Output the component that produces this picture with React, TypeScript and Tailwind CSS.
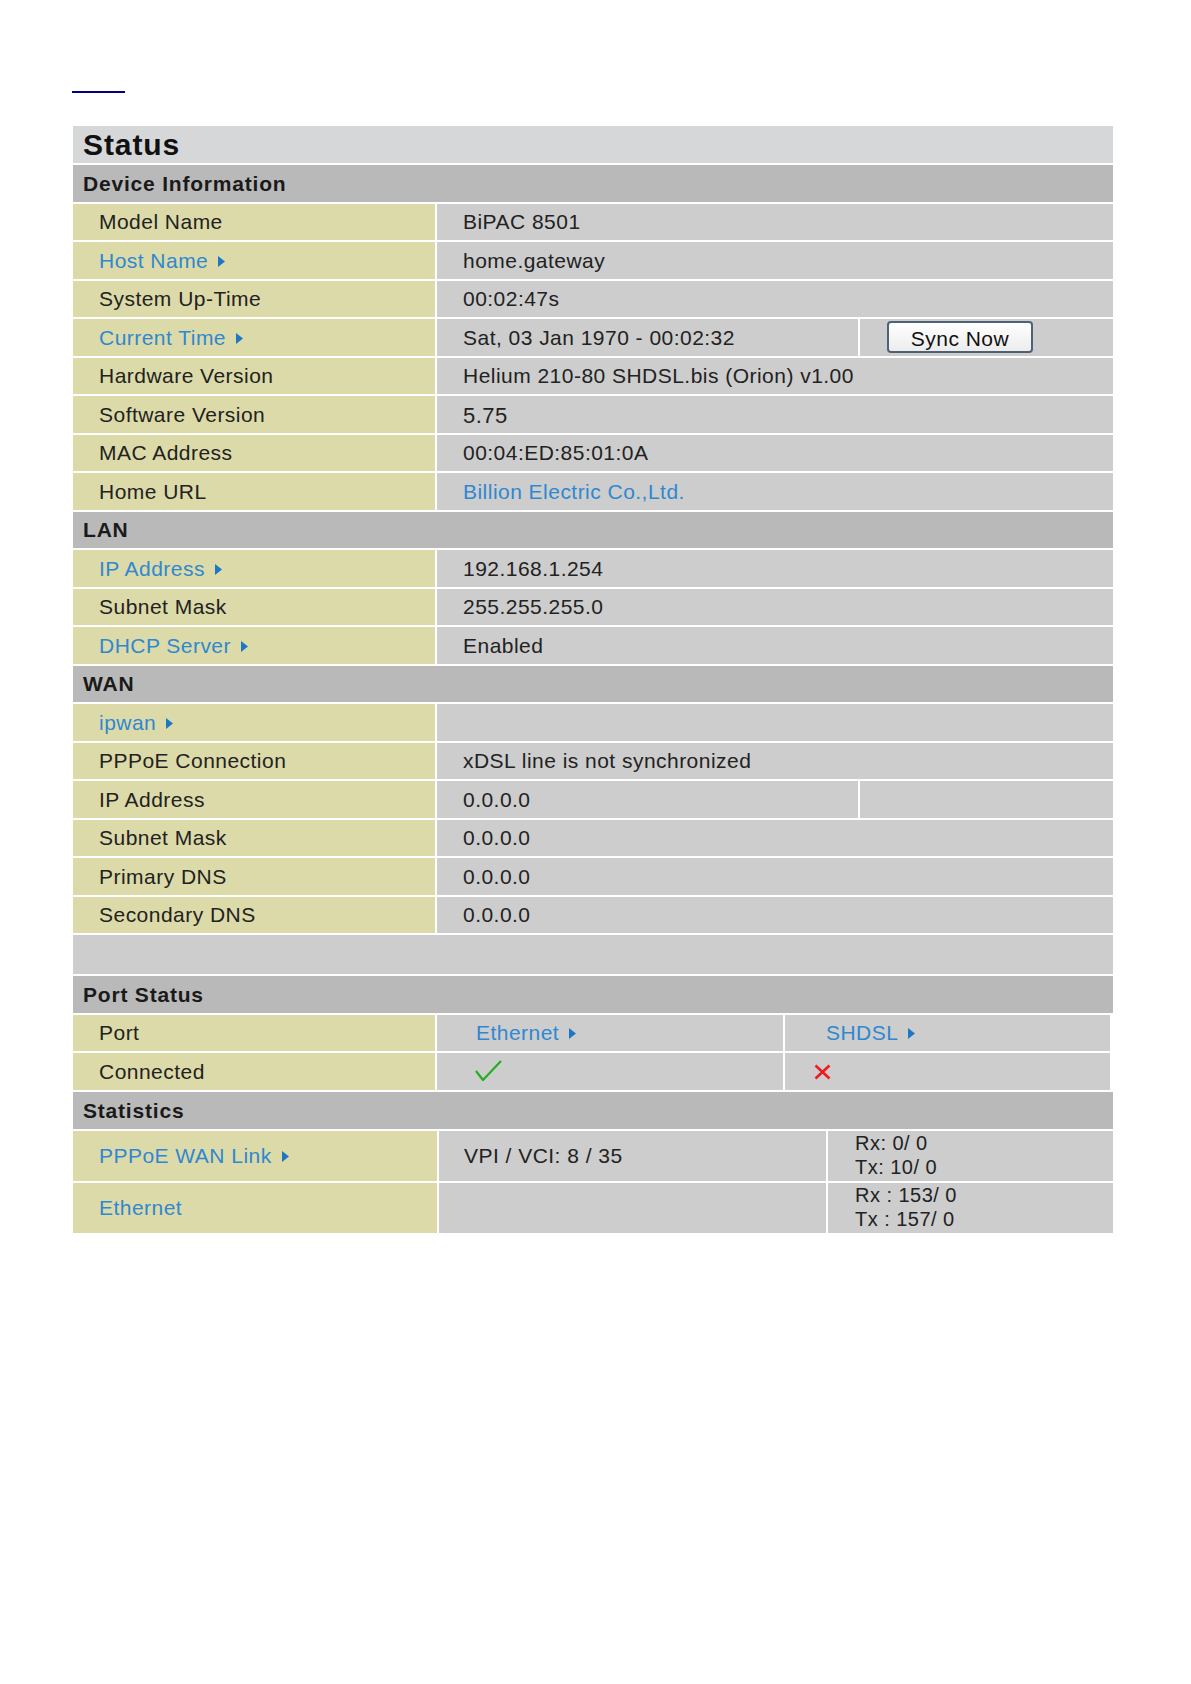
import React from "react"

const label = "bg-[#dcdaa8] pl-[26px] flex items-center"
const value = "bg-[#cdcdcd] pl-[26px] flex items-center"
const link = "text-[#2f88d0]"

function Arrow() {
	return (
		<svg width="7" height="11" viewBox="0 0 7 11" className="ml-[10px] mt-[2px]">
			<polygon points="0,0 7,5.5 0,11" fill="#1c78c4" />
		</svg>
	)
}

function Section({ title }: { title: string }) {
	return (
		<div className="h-[36.5px] bg-[#b9b9b9] pl-[10px] flex items-center font-bold text-[21px] tracking-[0.8px] text-[#1a1a1a]">
			{title}
		</div>
	)
}

function Row({ name, isLink, children }: { name: string; isLink?: boolean; children?: React.ReactNode }) {
	return (
		<div className="h-[36.5px] grid grid-cols-[362px_1fr] gap-[2px]">
			<div className={label}>
				<span className={isLink ? link : ""}>{name}</span>
				{isLink && <Arrow />}
			</div>
			{children}
		</div>
	)
}

function Check() {
	return (
		<svg width="28" height="24" viewBox="0 0 28 24">
			<path d="M1 12 L8 21 L26 2" fill="none" stroke="#22b022" strokeWidth="2.2" strokeLinejoin="round" />
		</svg>
	)
}

function Cross() {
	return (
		<svg width="17" height="16" viewBox="0 0 17 16">
			<path d="M1.5 1.5 L15.5 14.5 M15.5 1.5 L1.5 14.5" stroke="#ee1c1c" strokeWidth="2.6" />
		</svg>
	)
}

export default function App() {
	return (
		<div className="min-h-screen bg-white font-['Liberation_Sans',Arial,sans-serif] text-[21px] tracking-[0.47px] text-[#222]">
			<div className="pl-[72px] pt-[91px]">
				<div className="w-[53px] h-[2px] bg-[#000080]" />
			</div>
			<div className="ml-[73px] mt-[33px] w-[1040px] flex flex-col gap-[2px]">
				<div className="h-[37px] bg-[#d6d7d9] pl-[10px] flex items-center text-[30px] font-bold text-[#111] tracking-[0.9px]">
					Status
				</div>
				<Section title="Device Information" />
				<Row name="Model Name"><div className={value}>BiPAC 8501</div></Row>
				<Row name="Host Name" isLink><div className={value}>home.gateway</div></Row>
				<Row name="System Up-Time"><div className={value}>00:02:47s</div></Row>
				<Row name="Current Time" isLink>
					<div className="grid grid-cols-[421px_1fr] gap-[2px]">
						<div className={value}>Sat, 03 Jan 1970 - 00:02:32</div>
						<div className="bg-[#cdcdcd] pl-[27px] flex items-center">
							<button className="w-[146px] h-[32px] rounded-[4px] border-2 border-[#4d6279] bg-gradient-to-b from-white to-[#ececec] text-[21px] text-[#111]">
								Sync Now
							</button>
						</div>
					</div>
				</Row>
				<Row name="Hardware Version"><div className={value}>Helium 210-80 SHDSL.bis (Orion) v1.00</div></Row>
				<Row name="Software Version"><div className={`${value} text-[22px] pt-[3px]`}>5.75</div></Row>
				<Row name="MAC Address"><div className={value}>00:04:ED:85:01:0A</div></Row>
				<Row name="Home URL"><div className={`${value} ${link}`}>Billion Electric Co.,Ltd.</div></Row>

				<Section title="LAN" />
				<Row name="IP Address" isLink><div className={value}>192.168.1.254</div></Row>
				<Row name="Subnet Mask"><div className={value}>255.255.255.0</div></Row>
				<Row name="DHCP Server" isLink><div className={value}>Enabled</div></Row>

				<Section title="WAN" />
				<Row name="ipwan" isLink><div className={value} /></Row>
				<Row name="PPPoE Connection"><div className={value}>xDSL line is not synchronized</div></Row>
				<Row name="IP Address">
					<div className="grid grid-cols-[421px_1fr] gap-[2px]">
						<div className={value}>0.0.0.0</div>
						<div className="bg-[#cdcdcd]" />
					</div>
				</Row>
				<Row name="Subnet Mask"><div className={value}>0.0.0.0</div></Row>
				<Row name="Primary DNS"><div className={value}>0.0.0.0</div></Row>
				<Row name="Secondary DNS"><div className={value}>0.0.0.0</div></Row>
				<div className="h-[39px] bg-[#cdcdcd]" />

				<Section title="Port Status" />
				<div className="h-[36.5px] grid grid-cols-[362px_346px_325px] gap-[2px]">
					<div className={label}>Port</div>
					<div className="bg-[#cdcdcd] pl-[39px] flex items-center">
						<span className={link}>Ethernet</span>
						<Arrow />
					</div>
					<div className="bg-[#cdcdcd] pl-[41px] flex items-center">
						<span className={link}>SHDSL</span>
						<Arrow />
					</div>
				</div>
				<div className="h-[37px] grid grid-cols-[362px_346px_325px] gap-[2px]">
					<div className={label}>Connected</div>
					<div className="bg-[#cdcdcd] pl-[38px] flex items-center pb-[2px]">
						<Check />
					</div>
					<div className="bg-[#cdcdcd] pl-[29px] flex items-center">
						<Cross />
					</div>
				</div>

				<Section title="Statistics" />
				<div className="h-[50px] grid grid-cols-[364px_387px_1fr] gap-[2px]">
					<div className={label}>
						<span className={link}>PPPoE WAN Link</span>
						<Arrow />
					</div>
					<div className="bg-[#cdcdcd] pl-[25px] flex items-center">VPI / VCI: 8 / 35</div>
					<div className="bg-[#cdcdcd] pl-[27px] flex flex-col justify-center text-[20px] leading-[23.5px]">
						<div>Rx: 0/ 0</div>
						<div>Tx: 10/ 0</div>
					</div>
				</div>
				<div className="h-[50px] grid grid-cols-[364px_387px_1fr] gap-[2px]">
					<div className={label}>
						<span className={link}>Ethernet</span>
					</div>
					<div className="bg-[#cdcdcd]" />
					<div className="bg-[#cdcdcd] pl-[27px] flex flex-col justify-center text-[20px] leading-[23.5px]">
						<div>Rx : 153/ 0</div>
						<div>Tx : 157/ 0</div>
					</div>
				</div>
			</div>
		</div>
	)
}
